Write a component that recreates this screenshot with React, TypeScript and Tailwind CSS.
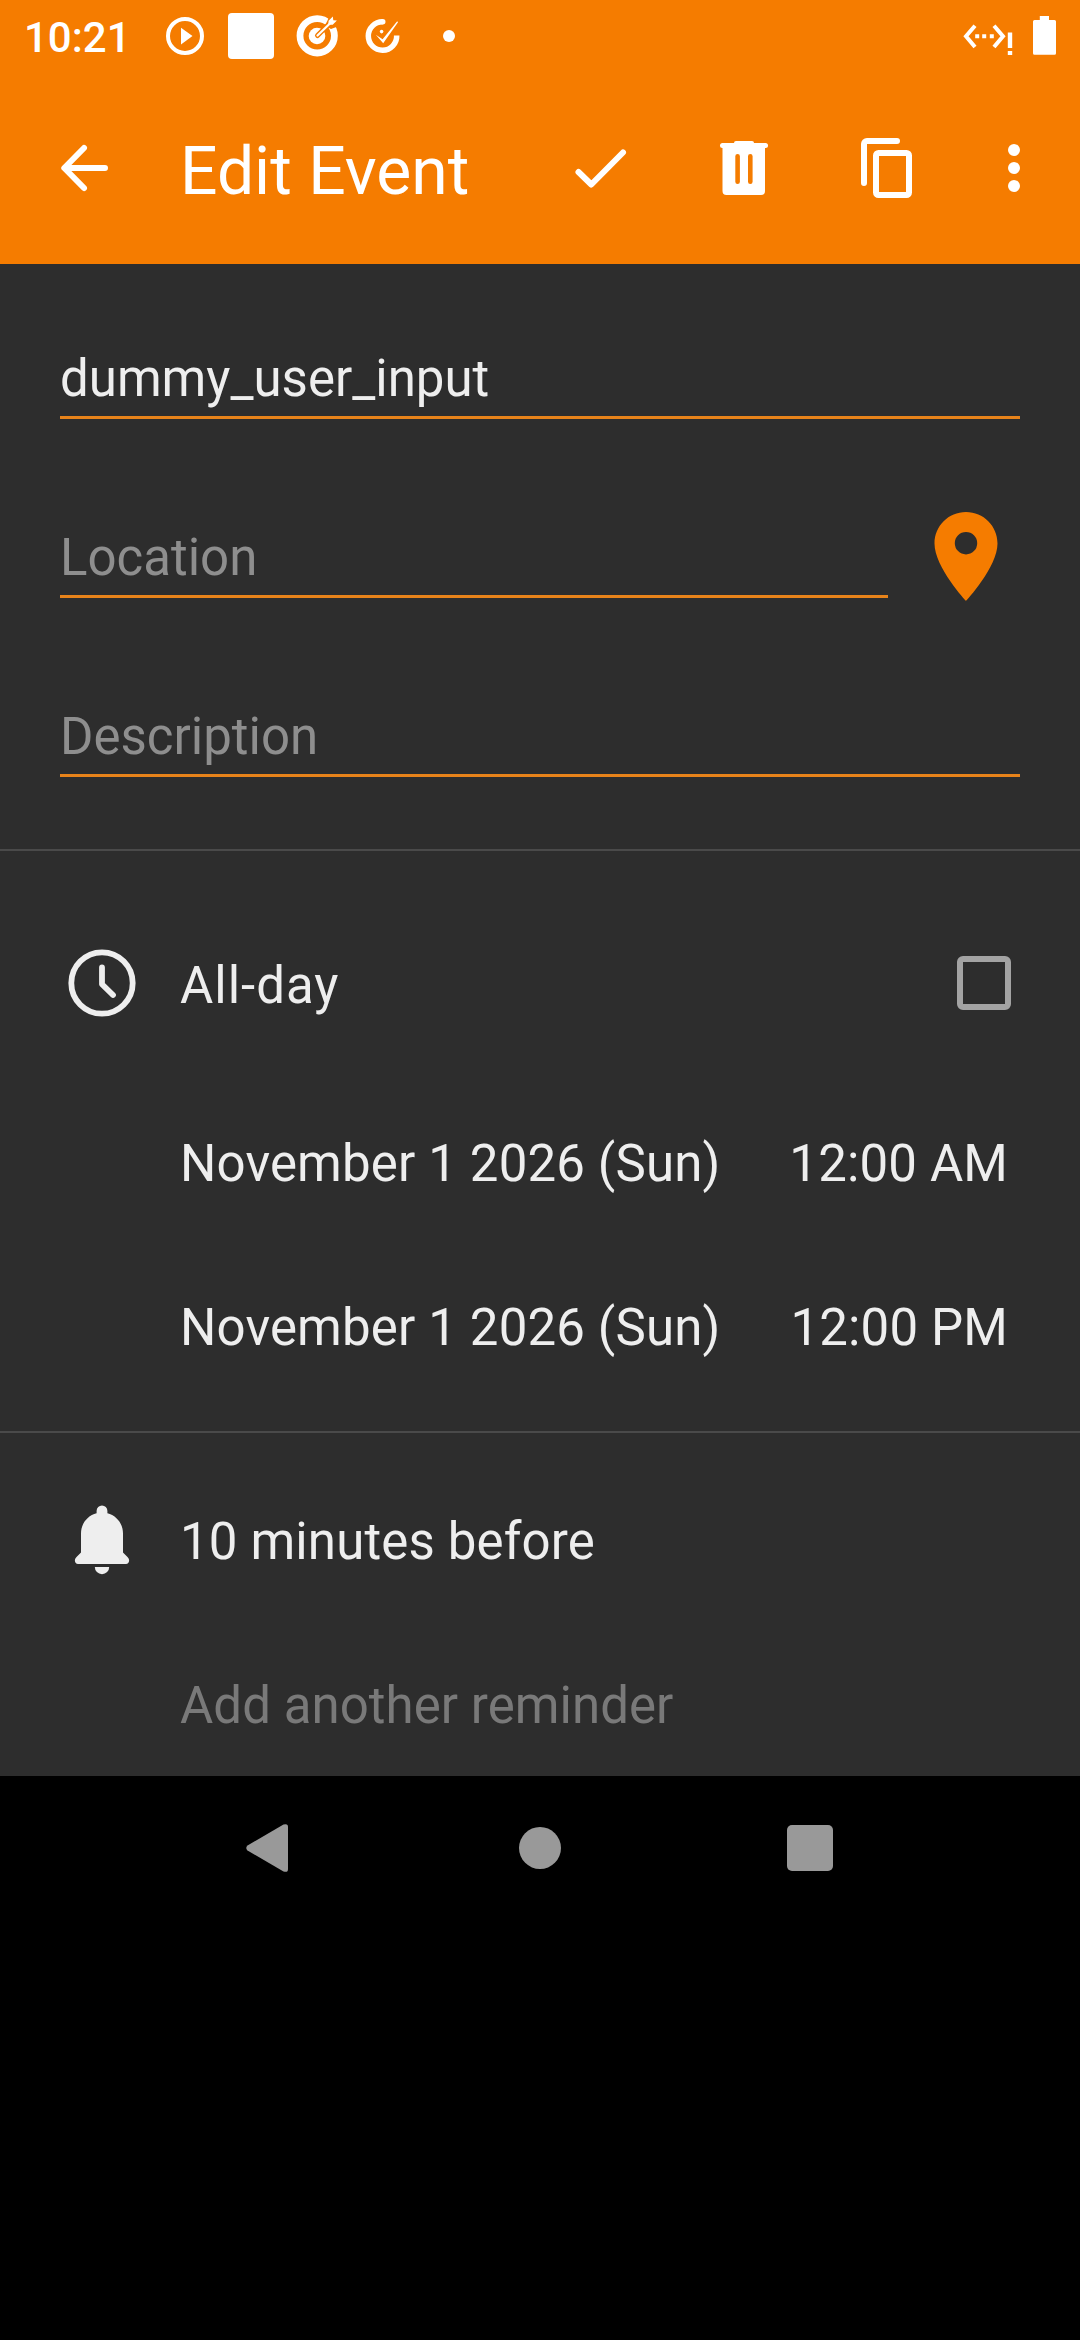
import React from 'react';

function StatusBar() {
  return (
    <div className="flex h-[72px] items-center pl-6 pr-6 text-white">
      <span className="w-[142px] pt-[3px] text-[42px] leading-[49px] font-medium">10:21</span>
      <svg className="size-[38px] shrink-0" viewBox="0 0 38 38" fill="none">
        <circle cx="19" cy="19" r="17" stroke="currentColor" strokeWidth="4" />
        <path d="M15 10.7v16.8L26.5 19z" fill="currentColor" />
      </svg>
      <div className="ml-6 size-[46px] shrink-0 rounded-[4px] bg-white" />
      <svg className="ml-[21px] size-[44px] shrink-0" viewBox="0 0 44 44" fill="none">
        <circle cx="22.2" cy="21.8" r="17.2" stroke="currentColor" strokeWidth="6.8" />
        <circle cx="22" cy="22" r="8.3" fill="currentColor" />
        <path d="M22.5 21.5L35 9" stroke="#f57c00" strokeWidth="5" strokeLinecap="round" />
        <path d="M30 12L34 3H44V12L36 15z" fill="#f57c00" />
        <path d="M22.5 21.5L37 7.5" stroke="currentColor" strokeWidth="2.2" strokeLinecap="round" />
        <path d="M33.2 10.8l.4-4 4.2-4.2.5 3.6 3.6.4-4.2 4.2z" fill="currentColor" />
      </svg>
      <svg className="ml-[25px] h-[44px] w-[36px] shrink-0" viewBox="0 0 36 44" fill="none">
        <path d="M18.8 7.8A14.2 14.2 0 1 0 32.7 21.5" stroke="currentColor" strokeWidth="5.5" />
        <circle cx="18.8" cy="7.8" r="2.7" fill="currentColor" />
        <path d="M11.8 20.8L18.6 25.2 33.2 7.2 34 8.3 19.2 29.2z" fill="currentColor" />
        <circle cx="17.6" cy="17.6" r="1.8" fill="currentColor" />
      </svg>
      <div className="ml-[43px] size-3 shrink-0 rounded-full bg-white" />
      <div className="ml-auto flex items-center gap-5">
        <svg className="h-[40px] w-[50px]" viewBox="0 0 50 40" fill="none" stroke="currentColor" strokeWidth="4">
          <path d="M12 9.8L3 20.3 12 31M31 9.8l9 10.5L31 31" />
          <path d="M12.2 20.3h4M19.2 20.3h4M26.8 20.3h4" />
          <path d="M47 16.5V32M47 35v4" strokeWidth="4.4" />
        </svg>
        <svg className="h-[40px] w-[23px]" viewBox="0 0 23 40" fill="currentColor">
          <path d="M6.8 0H16v4h5.500q1.500 0 1.500 1.500v31.800q0 1.500-1.500 1.500h-20Q0 38.800 0 37.300V5.500Q0 4 1.500 4h5.300z" />
        </svg>
      </div>
    </div>
  );
}

function Toolbar() {
  return (
    <div className="flex h-[192px] items-center pl-12 pr-[30px] text-white">
      <svg className="size-[72px]" viewBox="0 0 72 72" fill="none" stroke="currentColor" strokeWidth="6" strokeLinecap="round" strokeLinejoin="round">
        <path d="M36 16L16.300 36 36 56M17 36h40" />
      </svg>
      <h1 className="ml-[60px] pt-[7px] text-[66px] leading-[78px] font-normal">Edit Event</h1>
      <div className="ml-auto flex items-center">
        <svg className="size-[72px]" viewBox="0 0 72 72" fill="none" stroke="currentColor" strokeWidth="6" strokeLinecap="round" strokeLinejoin="round">
          <path d="M14.500 40L27.300 52.500 59 20.500" />
        </svg>
        <svg className="ml-[72px] size-[72px]" viewBox="0 0 72 72" fill="currentColor">
          <rect x="12" y="11" width="48" height="5" rx="2.500" />
          <rect x="26" y="9" width="20" height="6" rx="2" />
          <path
            fillRule="evenodd"
            d="M14.500 13H57v46q0 4-4 4H18.500q-4 0-4-4zM29.600 22a2.300 2.300 0 0 0-2.300 2.300v25.400a2.300 2.300 0 0 0 4.600 0V24.300A2.300 2.300 0 0 0 29.600 22zm12.700 0a2.300 2.300 0 0 0-2.300 2.300v25.400a2.300 2.300 0 0 0 4.600 0V24.300A2.300 2.300 0 0 0 42.300 22z"
          />
        </svg>
        <svg className="ml-[72px] size-[72px]" viewBox="0 0 72 72" fill="none" stroke="currentColor" strokeWidth="6" strokeLinecap="round">
          <path d="M12 51V12a3 3 0 0 1 3-3h30" />
          <rect x="24" y="21" width="33" height="42" rx="2.500" />
        </svg>
        <svg className="ml-[54px] size-[72px]" viewBox="0 0 72 72" fill="currentColor">
          <circle cx="36" cy="18" r="6" />
          <circle cx="36" cy="36" r="6" />
          <circle cx="36" cy="54" r="6" />
        </svg>
      </div>
    </div>
  );
}

function ClockIcon() {
  return (
    <svg className="size-[72px] shrink-0" viewBox="0 0 72 72" fill="none" stroke="currentColor" strokeWidth="5.800" strokeLinecap="round" strokeLinejoin="round">
      <circle cx="36" cy="36" r="30.700" />
      <path d="M36 20.500v16.700l11 10.800" />
    </svg>
  );
}

function BellIcon() {
  return (
    <svg className="-mt-1 size-[72px] shrink-0" viewBox="0 0 72 72" fill="currentColor">
      <path d="M36 1.500a5.400 5.400 0 0 1 5.400 5.400v2.300C50.500 11.500 57 19.500 57 29.500V48.500l4.500 4.500c3 3 1.500 7-1.500 7H12c-3 0-4.500-4-1.500-7l4.500-4.500V29.500C15 19.500 21.500 11.500 30.600 9.200V6.900A5.400 5.400 0 0 1 36 1.500z" />
      <path d="M28.800 63h14.400a7.200 7.200 0 0 1-14.400 0z" />
    </svg>
  );
}

function PinIcon() {
  return (
    <svg className="-my-[25px] mr-[22px] ml-[46px] h-[120px] w-16 shrink-0 text-[#f57c00]" viewBox="0 0 64 120" fill="currentColor">
      <path
        fillRule="evenodd"
        d="M32 9C14.500 9 .5 23 .5 40.500 .5 64 32 98 32 98S63.500 64 63.500 40.500C63.500 23 49.500 9 32 9zm0 20a11.200 11.200 0 1 0 0 22.400A11.200 11.200 0 1 0 32 29z"
      />
    </svg>
  );
}

function Field({ text, hint = false, children }: { text: string; hint?: boolean; children?: React.ReactNode }) {
  return (
    <div className="flex h-[70px] items-center">
      <div
        className={`h-[70px] flex-1 border-b-[3px] border-[#e7831a] leading-[60px] ${hint ? 'text-[#8e8e8e]' : ''}`}
      >
        {text}
      </div>
      {children}
    </div>
  );
}

function DateRow({ date, time }: { date: string; time: string }) {
  return (
    <div className="flex h-[164px] items-center justify-between pl-[180px] pr-[72px] tracking-[0.15px]">
      <span>{date}</span>
      <span>{time}</span>
    </div>
  );
}

export default function App() {
  return (
    <div className="flex h-[2340px] w-[1080px] flex-col overflow-hidden bg-black font-['Roboto',sans-serif]">
      <header className="h-[264px] bg-[#f57c00]">
        <StatusBar />
        <Toolbar />
      </header>

      <main className="h-[1512px] overflow-hidden bg-[#2d2d2d] text-[51px] leading-[60px] text-[#eeeeee]">
        <section className="flex flex-col gap-[109px] border-b-2 border-[#4a4a4a] px-[60px] pt-[85px] pb-[72px]">
          <Field text="dummy_user_input" />
          <Field text="Location" hint>
            <PinIcon />
          </Field>
          <Field text="Description" hint />
        </section>

        <section className="border-b-2 border-[#4a4a4a] pt-[50px] pb-[21px]">
          <div className="mb-[17px] flex h-[164px] items-center pl-[66px] pr-[69px]">
            <ClockIcon />
            <span className="ml-[42px] pt-[5px] tracking-[1px]">All-day</span>
            <div className="ml-auto size-[54px] rounded-[6px] border-[6px] border-[#a3a3a3]" />
          </div>
          <DateRow date="November 1 2026 (Sun)" time="12:00 AM" />
          <DateRow date="November 1 2026 (Sun)" time="12:00 PM" />
        </section>

        <section className="pt-[27px]">
          <div className="flex h-[164px] items-center pl-[66px]">
            <BellIcon />
            <span className="ml-[42px] tracking-[0.15px]">10 minutes before</span>
          </div>
          <div className="flex h-[164px] items-center pl-[180px] text-[#797979]">
            <span className="tracking-[0.05px]">Add another reminder</span>
          </div>
        </section>
      </main>

      <nav className="flex h-[144px] items-center pl-[246px] text-[#999999]">
        <svg className="h-[48px] w-[42px]" viewBox="0 0 42 48" fill="currentColor">
          <path d="M1.500 21.500L37.500.6Q42-1 42 3V45q0 4-4.500 2.400L1.500 26.500Q-1 24 1.500 21.500z" />
        </svg>
        <div className="ml-[231px] size-[42px] rounded-full bg-[#999999]" />
        <div className="ml-[226px] size-[46px] rounded-[5px] bg-[#999999]" />
      </nav>
    </div>
  );
}
